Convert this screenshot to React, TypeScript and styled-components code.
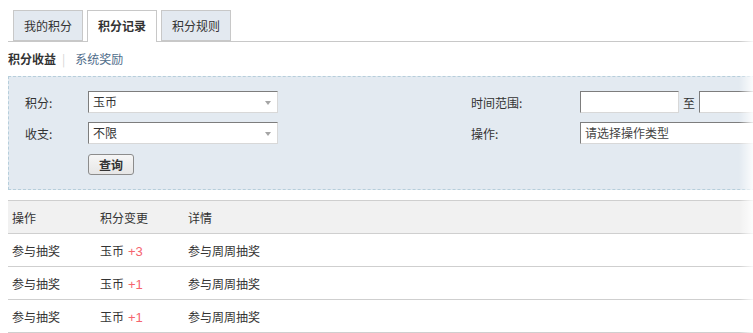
import React from "react";
import styled, { createGlobalStyle } from "styled-components";

const Global = createGlobalStyle`
  html, body { margin: 0; padding: 0; background: #fff; overflow: hidden; }
  body {
    font-family: "Microsoft YaHei", "Noto Sans CJK SC", "Liberation Sans", sans-serif;
    font-size: 12px;
    color: #333;
  }
`;

const Page = styled.div`
  position: relative;
  width: 753px;
  height: 333px;
  overflow: hidden;
`;

const Inner = styled.div`
  width: 1000px;
  padding: 10px 0 0 8px;
  box-sizing: border-box;
`;

const TabBar = styled.div`
  display: flex;
  gap: 4px;
  padding-left: 5px;
  border-bottom: 1px solid #c8c8c8;
  height: 31px;
`;

const Tab = styled.div<{ $active?: boolean }>`
  box-sizing: border-box;
  height: ${(p) => (p.$active ? "32px" : "31px")};
  padding: 0 10px;
  line-height: 30px;
  border: 1px solid #c8c8c8;
  border-bottom: ${(p) => (p.$active ? "none" : "1px solid #c8c8c8")};
  background: ${(p) => (p.$active ? "#fff" : "#e3e9f0")};
  font-weight: ${(p) => (p.$active ? "bold" : "normal")};
  color: #333;
  cursor: pointer;
`;

const SubNav = styled.div`
  display: flex;
  align-items: center;
  height: 34px;
  line-height: 34px;
`;

const SubItem = styled.span<{ $active?: boolean }>`
  font-weight: ${(p) => (p.$active ? "bold" : "normal")};
  color: ${(p) => (p.$active ? "#333" : "#4f6d8a")};
`;

const Sep = styled.span`
  color: #d4d4d4;
  margin: 0 10px 0 6px;
`;

const FilterBox = styled.div`
  box-sizing: border-box;
  height: 114px;
  background: #e3eaf1;
  border: 1px dashed #b6cedb;
  padding: 14px 0 0 16px;
  display: grid;
  grid-template-columns: 63px 190px 193px 109px auto;
  grid-auto-rows: 22px;
  row-gap: 9px;
  align-items: center;
`;

const Label = styled.div`
  color: #333;
`;

const SelectBox = styled.div`
  position: relative;
  box-sizing: border-box;
  height: 22px;
  width: 190px;
  background: #fff;
  border-top: 1px solid #7d7d7d;
  border-left: 1px solid #7d7d7d;
  border-right: 1px solid #d8d8d8;
  border-bottom: 1px solid #d8d8d8;
  padding-left: 4px;
  line-height: 20px;
`;

const Arrow = styled.span`
  position: absolute;
  right: 6px;
  top: 9px;
  width: 0;
  height: 0;
  border-left: 3px solid transparent;
  border-right: 3px solid transparent;
  border-top: 4px solid #a5a5a5;
`;

const DateGroup = styled.div`
  display: flex;
  align-items: center;
`;

const TextInput = styled.div<{ $w: number }>`
  box-sizing: border-box;
  height: 22px;
  width: ${(p) => p.$w}px;
  background: #fff;
  border-top: 1px solid #7d7d7d;
  border-left: 1px solid #7d7d7d;
  border-right: 1px solid #d8d8d8;
  border-bottom: 1px solid #d8d8d8;
  padding-left: 4px;
  line-height: 20px;
  color: #444;
`;

const To = styled.span`
  margin: 0 4px;
`;

const Button = styled.button`
  box-sizing: border-box;
  height: 21px;
  width: 46px;
  padding: 0;
  font-family: inherit;
  font-size: 12px;
  font-weight: bold;
  color: #333;
  background: linear-gradient(#f6f6f6, #e6e6e6);
  border: 1px solid #8c8c8c;
  border-radius: 3px;
`;

const Table = styled.div`
  margin-top: 10px;
  border-top: 1px solid #cfcfcf;
`;

const Row = styled.div<{ $head?: boolean }>`
  display: grid;
  grid-template-columns: 88px 88px 1fr;
  height: 33px;
  box-sizing: border-box;
  align-items: center;
  padding-left: 4px;
  border-bottom: 1px solid #cfcfcf;
  background: ${(p) => (p.$head ? "#f1f1f1" : "#fff")};
`;

const Plus = styled.span`
  font-family: "Liberation Sans", sans-serif;
  font-size: 13px;
  color: #f5646e;
  margin-left: 4px;
`;

const Fade = styled.div`
  position: absolute;
  top: 0;
  right: 0;
  width: 14px;
  height: 100%;
  background: linear-gradient(to right, rgba(255, 255, 255, 0), rgba(255, 255, 255, 0.85));
  pointer-events: none;
`;

const rows = [
  { op: "参与抽奖", amt: "+3", detail: "参与周周抽奖" },
  { op: "参与抽奖", amt: "+1", detail: "参与周周抽奖" },
  { op: "参与抽奖", amt: "+1", detail: "参与周周抽奖" },
];

export default function App() {
  return (
    <Page>
      <Global />
      <Inner>
        <TabBar>
          <Tab>我的积分</Tab>
          <Tab $active>积分记录</Tab>
          <Tab>积分规则</Tab>
        </TabBar>
        <SubNav>
          <SubItem $active>积分收益</SubItem>
          <Sep>|</Sep>
          <SubItem>系统奖励</SubItem>
        </SubNav>
        <FilterBox>
          <Label>积分:</Label>
          <SelectBox>
            玉币
            <Arrow />
          </SelectBox>
          <div />
          <Label>时间范围:</Label>
          <DateGroup>
            <TextInput $w={99} />
            <To>至</To>
            <TextInput $w={99} />
          </DateGroup>

          <Label>收支:</Label>
          <SelectBox>
            不限
            <Arrow />
          </SelectBox>
          <div />
          <Label>操作:</Label>
          <TextInput $w={220}>请选择操作类型</TextInput>

          <div />
          <Button>查询</Button>
        </FilterBox>
        <Table>
          <Row $head>
            <div>操作</div>
            <div>积分变更</div>
            <div>详情</div>
          </Row>
          {rows.map((r, i) => (
            <Row key={i}>
              <div>{r.op}</div>
              <div>
                玉币<Plus>{r.amt}</Plus>
              </div>
              <div>{r.detail}</div>
            </Row>
          ))}
        </Table>
      </Inner>
      <Fade />
    </Page>
  );
}
